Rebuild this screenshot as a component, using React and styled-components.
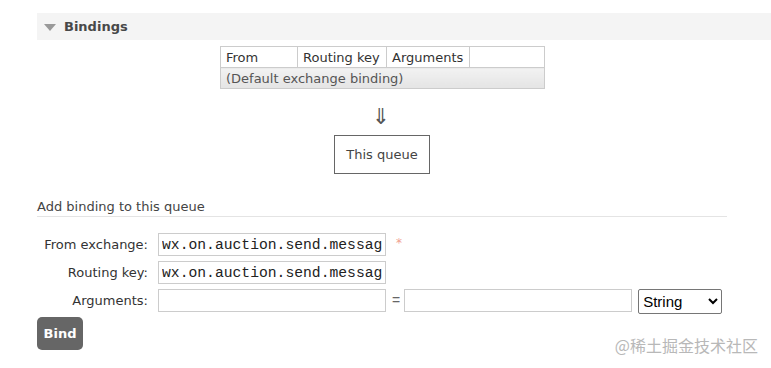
import styled, { createGlobalStyle } from "styled-components";

const GlobalStyle = createGlobalStyle`
  body {
    margin: 0;
    background: #fff;
    font-family: "DejaVu Sans", Verdana, sans-serif;
    font-size: 13px;
    color: #444;
  }
`;

const Page = styled.div`
  position: relative;
  width: 771px;
  height: 368px;
  padding: 13px 0 0 37px;
  box-sizing: border-box;
  overflow: hidden;
`;

const SectionHead = styled.h2`
  display: flex;
  align-items: center;
  gap: 8px;
  margin: 0;
  height: 27px;
  padding-left: 7px;
  background: #f4f4f4;
  font-size: 13px;
  font-weight: bold;
  color: #484848;

  &::before {
    content: "";
    border-left: 6px solid transparent;
    border-right: 6px solid transparent;
    border-top: 7px solid #999;
    margin-top: 1px;
  }
`;

const Diagram = styled.div`
  display: flex;
  flex-direction: column;
  align-items: center;
  padding-top: 6px;
  width: 690px;
`;

const Table = styled.table`
  border-collapse: collapse;
  width: 325px;
  margin-left: 1px;

  th,
  td {
    border: 1px solid #ccc;
    text-align: left;
    font-weight: normal;
    padding: 0 5px;
    height: 20px;
    color: #333;
    white-space: nowrap;
  }
  td {
    background: linear-gradient(#f2f2f2, #e4e4e4);
    color: #555;
  }
`;

const Arrow = styled.div`
  font-size: 22px;
  line-height: 22px;
  margin-top: 17px;
  color: #555;
  margin-left: -2px;
`;

const QueueBox = styled.div`
  margin-top: 7px;
  width: 94px;
  height: 37px;
  border: 1px solid #666;
  display: flex;
  align-items: center;
  justify-content: center;
  color: #444;
`;

const SubHead = styled.h3`
  margin: 25px 0 0;
  width: 690px;
  font-size: 13px;
  font-weight: normal;
  color: #444;
  padding-bottom: 2px;
  border-bottom: 1px solid #e4e4e4;
`;

const Form = styled.form`
  display: grid;
  grid-template-columns: 121px auto;
  row-gap: 5px;
  margin-top: 16px;
  align-items: start;
`;

const Label = styled.label`
  text-align: right;
  padding-right: 10px;
  line-height: 23px;
  color: #333;
  white-space: nowrap;
`;

const Row = styled.div`
  display: flex;
  align-items: flex-start;
`;

const TextInput = styled.input`
  width: 228px;
  height: 23px;
  box-sizing: border-box;
  border: 1px solid #ccc;
  padding: 0 3px;
  margin: 0;
  font-family: ${(p) => (p.$mono ? '"Liberation Mono", monospace' : '"DejaVu Sans", sans-serif')};
  font-size: 14.7px;
  color: #222;
  outline: none;
`;

const Required = styled.span`
  color: #f0a090;
  margin-left: 10px;
  font-size: 12px;
  line-height: 20px;
`;

const Equals = styled.span`
  margin: 0 4px 0 6px;
  line-height: 23px;
  color: #666;
  font-family: "Liberation Sans", Arial, sans-serif;
  font-size: 14px;
`;

const Select = styled.select`
  margin-left: 6px;
  width: 84px;
  height: 25px;
  border: 1px solid #767676;
  border-radius: 2px;
  background: #fff;
  font-family: "Liberation Sans", Arial, sans-serif;
  font-size: 15px;
  color: #000;
`;

const Button = styled.button`
  grid-column: 1 / 2;
  justify-self: start;
  margin-top: -2px;
  width: 46px;
  height: 33px;
  border: none;
  border-radius: 5px;
  background: #666;
  color: #fff;
  font-family: "DejaVu Sans", Verdana, sans-serif;
  font-weight: bold;
  font-size: 13px;
`;

const Watermark = styled.div`
  position: absolute;
  right: 13px;
  bottom: 11px;
  font-family: "Noto Sans CJK SC", sans-serif;
  font-size: 16px;
  color: #b8b8b8;
`;

export default function App() {
  return (
    <Page>
      <GlobalStyle />
      <SectionHead>Bindings</SectionHead>
      <Diagram>
        <Table>
          <thead>
            <tr>
              <th style={{ width: 66 }}>From</th>
              <th style={{ width: 78 }}>Routing key</th>
              <th style={{ width: 72 }}>Arguments</th>
              <th></th>
            </tr>
          </thead>
          <tbody>
            <tr>
              <td colSpan={4}>(Default exchange binding)</td>
            </tr>
          </tbody>
        </Table>
        <Arrow>⇓</Arrow>
        <QueueBox>This queue</QueueBox>
      </Diagram>
      <SubHead>Add binding to this queue</SubHead>
      <Form onSubmit={(e) => e.preventDefault()}>
        <Label>From exchange:</Label>
        <Row>
          <TextInput $mono defaultValue="wx.on.auction.send.message" />
          <Required>*</Required>
        </Row>
        <Label>Routing key:</Label>
        <Row>
          <TextInput $mono defaultValue="wx.on.auction.send.message" />
        </Row>
        <Label>Arguments:</Label>
        <Row>
          <TextInput />
          <Equals>=</Equals>
          <TextInput />
          <Select defaultValue="String">
            <option>String</option>
            <option>Number</option>
            <option>Boolean</option>
            <option>List</option>
          </Select>
        </Row>
        <Button type="submit">Bind</Button>
      </Form>
      <Watermark>@稀土掘金技术社区</Watermark>
    </Page>
  );
}
